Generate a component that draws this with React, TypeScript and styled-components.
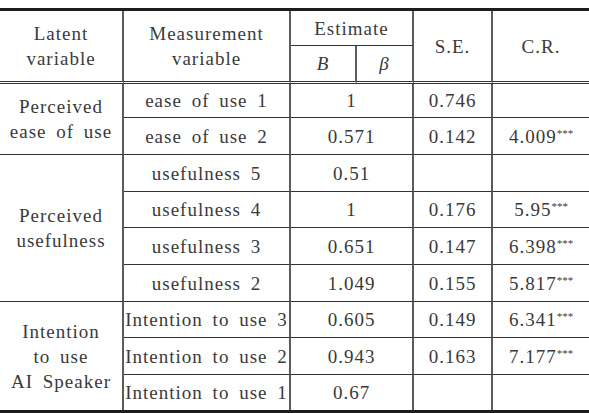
import React from 'react'
import styled, {createGlobalStyle} from 'styled-components'

const GlobalStyle = createGlobalStyle`
  body {
    margin: 0;
    background: #ffffff;
  }
`

type Edge = 'none' | 'single' | 'double'

interface Item {
  name: string
  estimate: string
  se: string
  cr: string
}

interface Group {
  label: string[]
  items: Item[]
}

const groups: Group[] = [
  {
    label: ['Perceived', 'ease of use'],
    items: [
      {name: 'ease of use 1', estimate: '1', se: '0.746', cr: ''},
      {name: 'ease of use 2', estimate: '0.571', se: '0.142', cr: '4.009'}
    ]
  },
  {
    label: ['Perceived', 'usefulness'],
    items: [
      {name: 'usefulness 5', estimate: '0.51', se: '', cr: ''},
      {name: 'usefulness 4', estimate: '1', se: '0.176', cr: '5.95'},
      {name: 'usefulness 3', estimate: '0.651', se: '0.147', cr: '6.398'},
      {name: 'usefulness 2', estimate: '1.049', se: '0.155', cr: '5.817'}
    ]
  },
  {
    label: ['Intention', 'to use', 'AI Speaker'],
    items: [
      {name: 'Intention to use 3', estimate: '0.605', se: '0.149', cr: '6.341'},
      {name: 'Intention to use 2', estimate: '0.943', se: '0.163', cr: '7.177'},
      {name: 'Intention to use 1', estimate: '0.67', se: '', cr: ''}
    ]
  }
]

const Page = styled.div`
  padding-top: 8px;
`

const Grid = styled.div`
  display: grid;
  width: 589px;
  grid-template-columns: 124px 167px 66px 57px 79px 96px;
  grid-template-rows: 35px 38px 34px 37px 37px 36px 37px 37px 36px 37px 35px;
  border-top: 3px solid #1c1c1c;
  border-bottom: 3px solid #1c1c1c;
  font-family: 'Liberation Serif', 'Times New Roman', serif;
  font-size: 19px;
  letter-spacing: 1px;
  word-spacing: 4px;
  color: #3a3a3a;
`

const Cell = styled.div<{
  $rows?: number
  $cols?: number
  $bottom?: Edge
  $noRight?: boolean
}>`
  box-sizing: border-box;
  grid-row: span ${(p) => p.$rows ?? 1};
  grid-column: span ${(p) => p.$cols ?? 1};
  display: flex;
  flex-direction: column;
  align-items: center;
  justify-content: center;
  text-align: center;
  line-height: 25px;
  white-space: nowrap;
  overflow: visible;
  border-right: ${(p) => (p.$noRight ? 'none' : '2px solid #5c5c5c')};
  border-bottom: ${(p) =>
    p.$bottom === 'double'
      ? '3px double #333333'
      : p.$bottom === 'none'
      ? 'none'
      : '1.5px solid #333333'};
`

const Italic = styled.span`
  font-style: italic;
`

const Stars = styled.sup`
  font-size: 11px;
  letter-spacing: 0;
  line-height: 0;
  vertical-align: 6px;
`

const Lines = ({lines}: {lines: string[]}) => (
  <>
    {lines.map((l) => (
      <span key={l}>{l}</span>
    ))}
  </>
)

const App = () => {
  return (
    <Page>
      <GlobalStyle />
      <Grid>
        <Cell $rows={2} $bottom="double">
          <Lines lines={['Latent', 'variable']} />
        </Cell>
        <Cell $rows={2} $bottom="double">
          <Lines lines={['Measurement', 'variable']} />
        </Cell>
        <Cell $cols={2}>Estimate</Cell>
        <Cell $rows={2} $bottom="double">
          S.E.
        </Cell>
        <Cell $rows={2} $bottom="double" $noRight>
          C.R.
        </Cell>
        <Cell $bottom="double">
          <Italic>B</Italic>
        </Cell>
        <Cell $bottom="double">
          <Italic>β</Italic>
        </Cell>

        {groups.map((g, gi) => {
          const lastGroup = gi === groups.length - 1
          return (
            <React.Fragment key={g.label.join(' ')}>
              <Cell $rows={g.items.length} $bottom={lastGroup ? 'none' : 'single'}>
                <Lines lines={g.label} />
              </Cell>
              {g.items.map((it, ii) => {
                const bottom: Edge =
                  lastGroup && ii === g.items.length - 1 ? 'none' : 'single'
                return (
                  <React.Fragment key={it.name}>
                    <Cell $bottom={bottom}>{it.name}</Cell>
                    <Cell $cols={2} $bottom={bottom}>
                      {it.estimate}
                    </Cell>
                    <Cell $bottom={bottom}>{it.se}</Cell>
                    <Cell $bottom={bottom} $noRight>
                      {it.cr && (
                        <span>
                          {it.cr}
                          <Stars>***</Stars>
                        </span>
                      )}
                    </Cell>
                  </React.Fragment>
                )
              })}
            </React.Fragment>
          )
        })}
      </Grid>
    </Page>
  )
}

export default App
